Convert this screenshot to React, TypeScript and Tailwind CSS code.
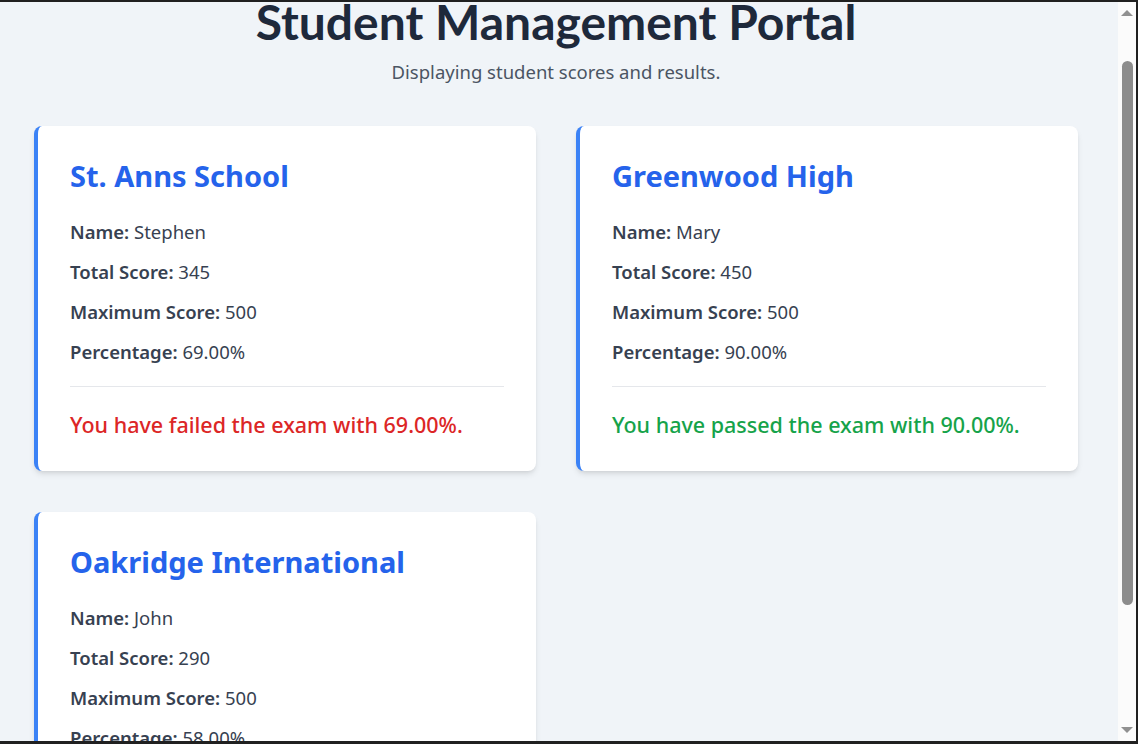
import React from "react";

interface Student {
  school: string;
  name: string;
  total: number;
  max: number;
}

const students: Student[] = [
  { school: "St. Anns School", name: "Stephen", total: 345, max: 500 },
  { school: "Greenwood High", name: "Mary", total: 450, max: 500 },
  { school: "Oakridge International", name: "John", total: 290, max: 500 },
];

function StudentCard({ s }: { s: Student }) {
  const pct = ((s.total / s.max) * 100).toFixed(2);
  const passed = s.total / s.max >= 0.75;
  return (
    <div className="rounded-lg border-l-4 border-[#3b82f6] bg-white px-8 pt-8 pb-8 shadow-[0_4px_6px_-1px_rgba(0,0,0,0.1),0_2px_4px_-2px_rgba(0,0,0,0.1)]">
      <h2 className="mb-6 text-[29px] leading-9 font-bold text-[#2563eb]">{s.school}</h2>
      <div className="space-y-3 text-[18.5px] leading-7 text-[#374151]">
        <p>
          <span className="font-semibold">Name:</span> {s.name}
        </p>
        <p>
          <span className="font-semibold">Total Score:</span> {s.total}
        </p>
        <p>
          <span className="font-semibold">Maximum Score:</span> {s.max}
        </p>
        <p>
          <span className="font-semibold">Percentage:</span> {pct}%
        </p>
      </div>
      <div className="mt-5 border-t border-[#e5e7eb] pt-6">
        <p className={`text-[21.5px] leading-7 font-medium ${passed ? "text-[#16a34a]" : "text-[#dc2626]"}`}>
          You have {passed ? "passed" : "failed"} the exam with {pct}%.
        </p>
      </div>
    </div>
  );
}

function FakeScrollbar() {
  return (
    <div className="flex w-[18px] shrink-0 flex-col items-center bg-[#fbfbfb]">
      <div className="mt-[8px] h-0 w-0 border-x-[6px] border-b-[6px] border-x-transparent border-b-[#909090]" />
      <div className="mt-[45px] h-[544px] w-[11px] rounded-full bg-[#8c8c8c]" />
      <div className="mt-auto mb-[8px] h-0 w-0 border-x-[6px] border-t-[6px] border-x-transparent border-t-[#909090]" />
    </div>
  );
}

export default function App() {
  return (
    <div
      className="flex h-[744px] w-[1138px] overflow-hidden border-t-2 border-r-2 border-b-[3px] border-[#202020] bg-[#f0f4f8]"
      style={{ fontFamily: '"Segoe UI", "Noto Sans", sans-serif' }}
    >
      <div className="flex-1 overflow-hidden">
        <div className="mx-auto w-[1044px] translate-x-[-3px]">
          <h1 className="-mt-[4px] text-center font-['Lato',sans-serif] text-5xl leading-[48px] font-bold text-[#1e293b]">
            Student Management Portal
          </h1>
          <p className="mt-3 mb-10 text-center text-[18.5px] leading-7 text-[#4b5563]">
            Displaying student scores and results.
          </p>
          <div className="grid grid-cols-2 gap-x-10 gap-y-[41px]">
            {students.map((s) => (
              <StudentCard key={s.school} s={s} />
            ))}
          </div>
        </div>
      </div>
      <FakeScrollbar />
    </div>
  );
}
